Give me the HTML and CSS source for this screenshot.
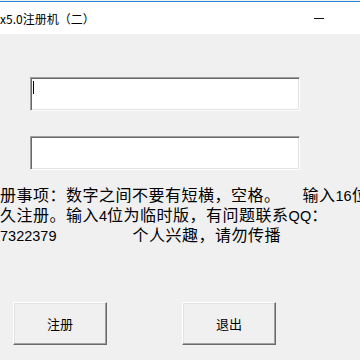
FILE: index.html
```html
<!DOCTYPE html>
<html lang="zh-CN">
  <head>
    <meta charset="utf-8" />
    <title>x5.0注册机（二）</title>
    <link rel="stylesheet" href="styles.css">
  </head>
  <body>
    <div class="window">
      <div class="titlebar">
        <span class="title">x5.0注册机（二）</span>
        <span class="minimize"></span>
      </div>

      <div class="client">
        <div class="fields">
          <div class="field"><span class="caret"></span></div>
          <div class="field"></div>
        </div>

        <div class="notes">
          <p>册事项：数字之间不要有短横，空格。<span class="gap">输入<span class="num">16</span>位</span></p>
          <p>久注册。输入<span class="num">4</span>位为临时版，有问题联系<span class="num">QQ</span>：</p>
          <p><span class="num">7322379</span><span class="tail">个人兴趣，请勿传播</span></p>
        </div>

        <div class="buttons">
          <button type="button" class="btn">注册</button>
          <button type="button" class="btn">退出</button>
        </div>
      </div>
    </div>
  </body>
</html>
```

FILE: styles.css
```css
html, body {
  margin: 0;
  padding: 0;
  width: 360px;
  height: 360px;
  overflow: hidden;
  background: #f0f0f0;
}
body {
  font-family: "Noto Sans CJK SC", sans-serif;
  color: #000;
}
/* Window frame with the accent border */
.window {
  height: 358px;
  margin-top: 1px;
  border-top: 1px solid #2c84d8;
  border-bottom: 1px solid #2c84d8;
  display: flex;
  flex-direction: column;
}
.titlebar {
  height: 32px;
  background: #fff;
  display: flex;
  align-items: center;
  position: relative;
}
.title {
  font-size: 12px;
  line-height: 16px;
  margin-top: 2px;
  white-space: nowrap;
}
.minimize {
  position: absolute;
  left: 314px;
  top: 16px;
  width: 10px;
  height: 1px;
  background: #111;
}
.client {
  flex: 1;
  display: flex;
  flex-direction: column;
  padding-top: 43px;
}
/* Sunken edit boxes */
.fields {
  display: flex;
  flex-direction: column;
  gap: 25px;
  padding-left: 30px;
}
.field {
  width: 268px;
  height: 32px;
  background: #fff;
  border-top: 1px solid #a0a0a0;
  border-left: 1px solid #a0a0a0;
  border-right: 1px solid #fff;
  border-bottom: 1px solid #fff;
  box-shadow: inset 1px 1px 0 #696969, inset -1px -1px 0 #e3e3e3;
  position: relative;
}
.caret {
  position: absolute;
  left: 2px;
  top: 3px;
  width: 1px;
  height: 13px;
  background: #000;
}
.notes {
  margin-top: 15px;
  font-size: 16px;
  line-height: 18px;
  letter-spacing: 0.5px;
  white-space: nowrap;
}
.notes p {
  margin: 0;
}
.num {
  font-family: "Liberation Sans", sans-serif;
  font-size: 14.5px;
  letter-spacing: 0;
}
.gap {
  margin-left: 22px;
}
.tail {
  margin-left: 76px;
}
/* Raised push buttons */
.buttons {
  margin-top: 57px;
  display: flex;
  gap: 75px;
  padding-left: 13px;
}
.btn {
  width: 94px;
  height: 43px;
  margin: 0;
  padding: 0;
  background: #f0f0f0;
  font-family: "Noto Sans CJK SC", sans-serif;
  font-size: 13px;
  color: #000;
  border-top: 1px solid #fff;
  border-left: 1px solid #fff;
  border-right: 1px solid #696969;
  border-bottom: 1px solid #696969;
  box-shadow: inset -1px -1px 0 #a0a0a0, inset 1px 1px 0 #e3e3e3;
}
```
